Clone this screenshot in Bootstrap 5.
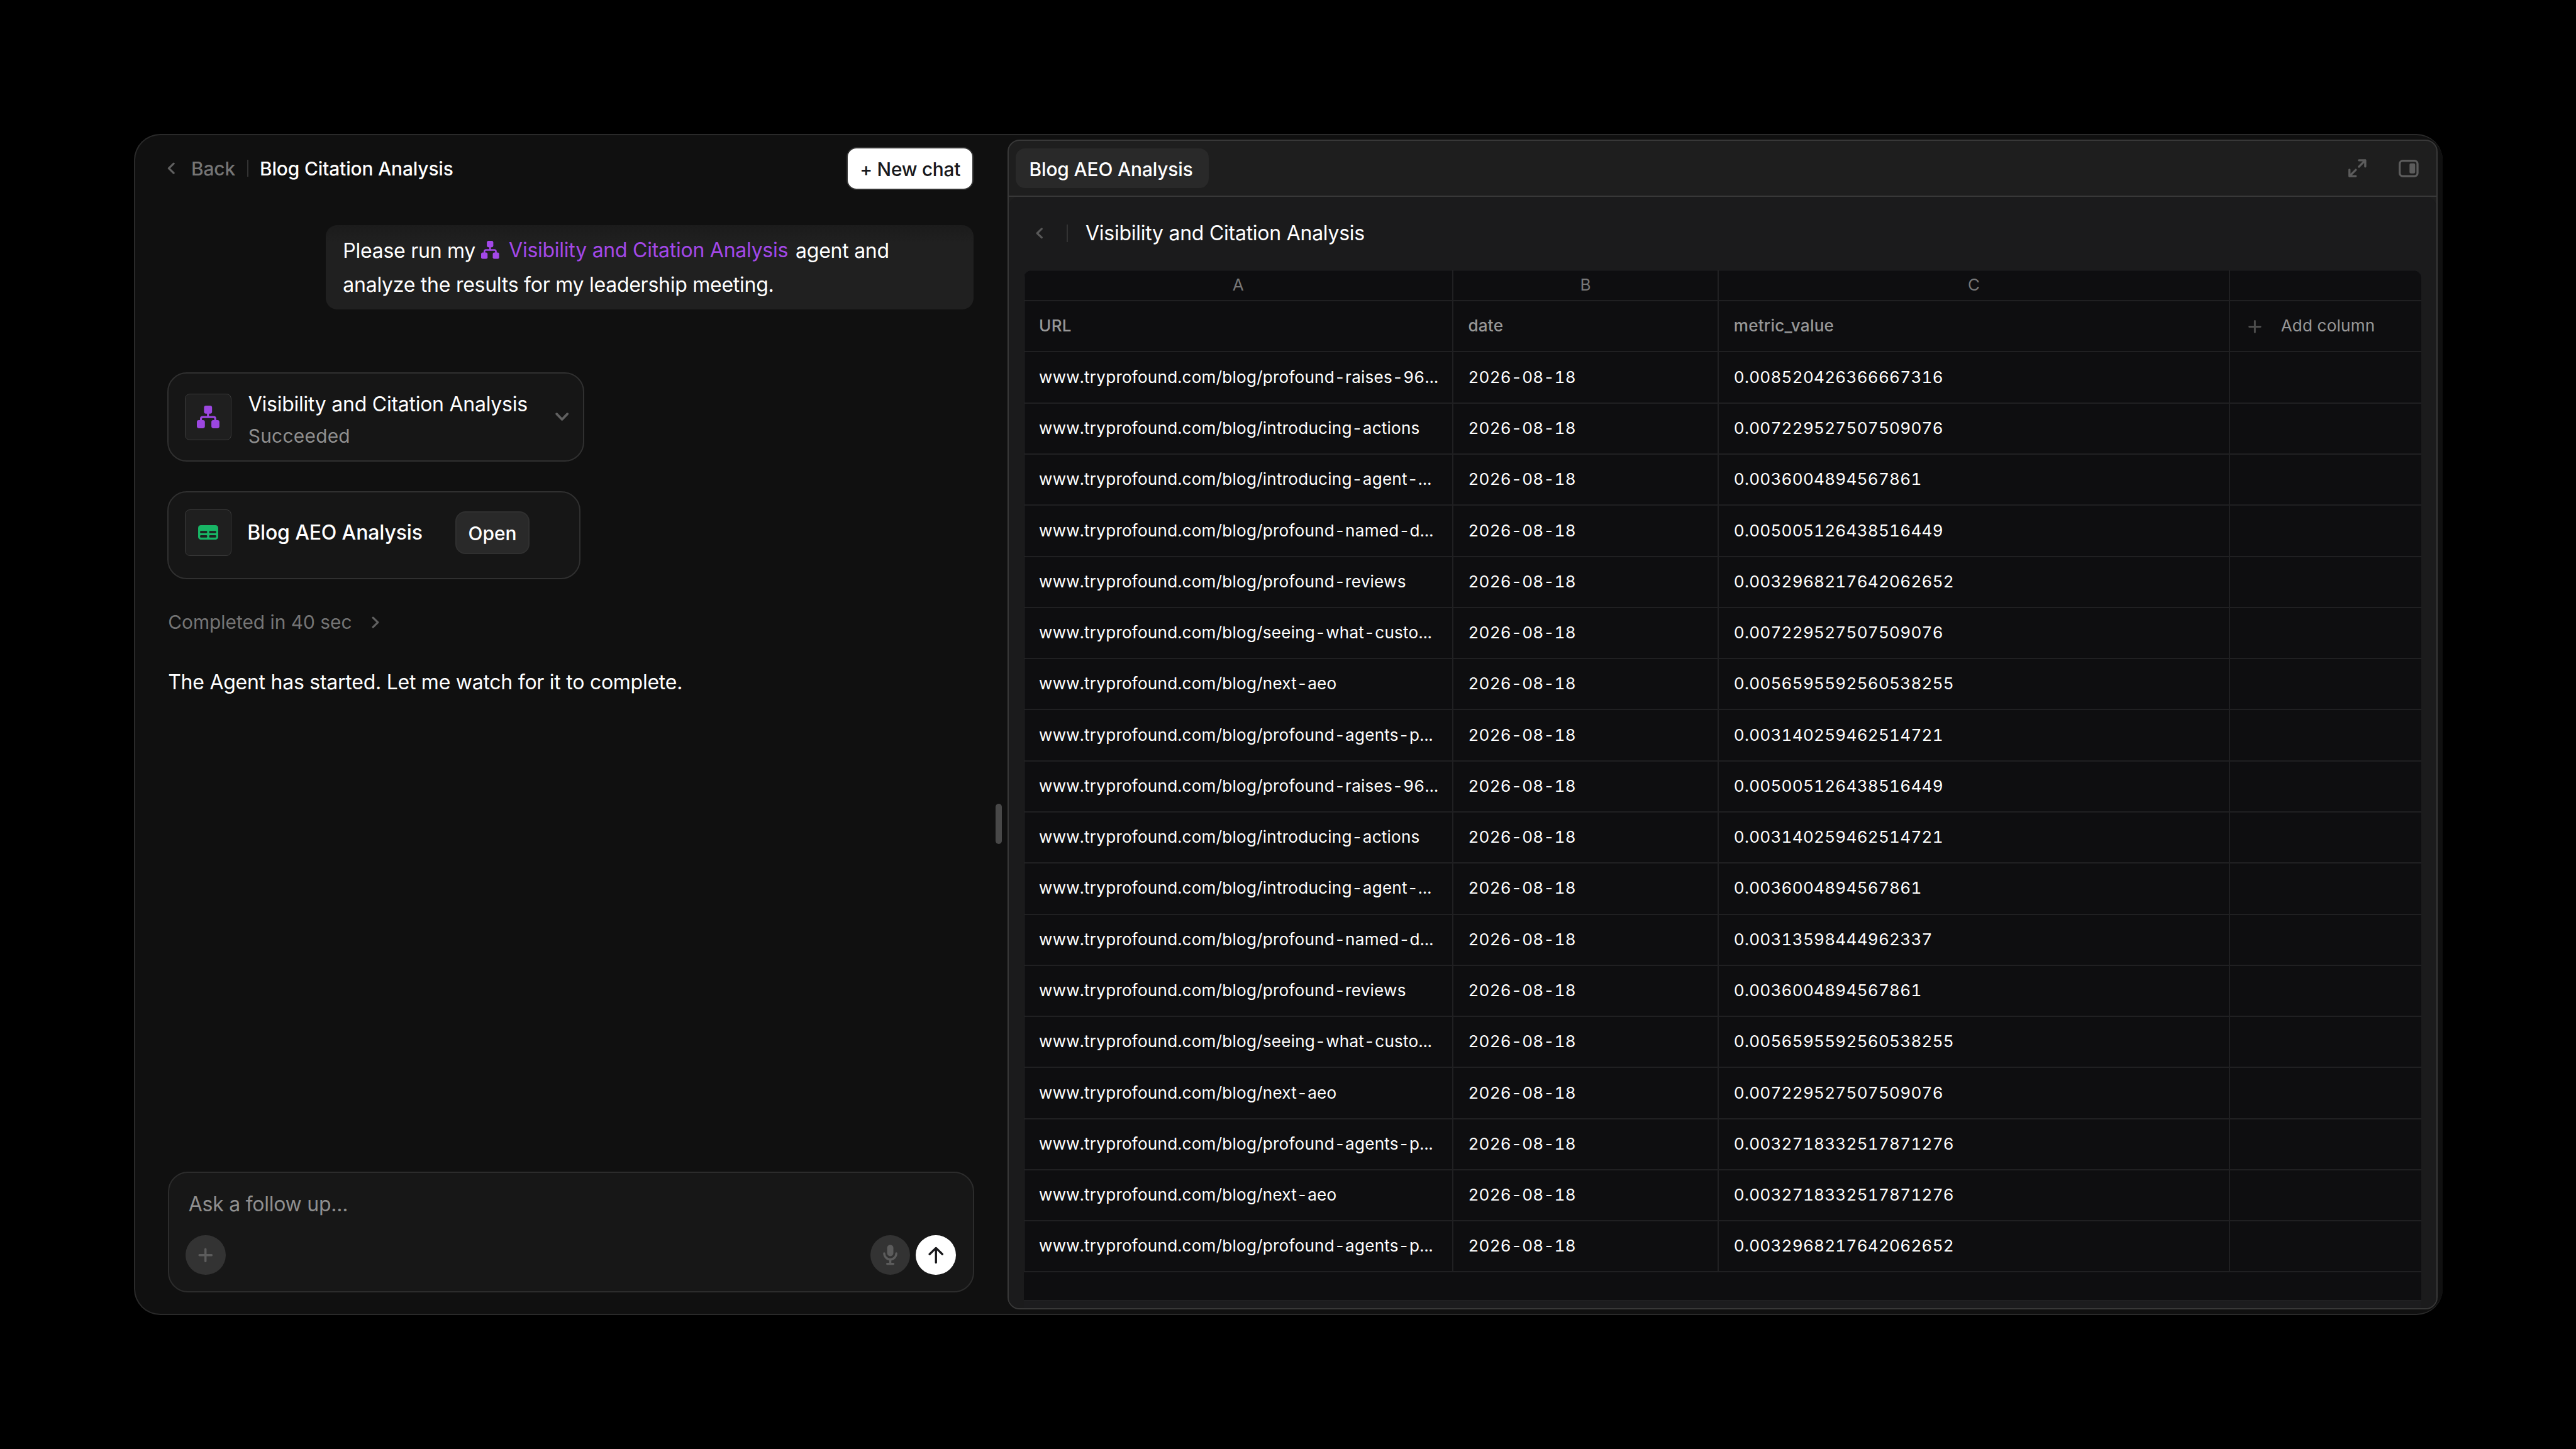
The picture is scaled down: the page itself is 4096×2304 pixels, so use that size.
<!DOCTYPE html>
<html lang="en" data-bs-theme="dark">
<head>
<meta charset="utf-8">
<meta name="viewport" content="width=device-width, initial-scale=1">
<title>Blog Citation Analysis</title>
<link href="https://cdn.jsdelivr.net/npm/bootstrap@5.3.0/dist/css/bootstrap.min.css" rel="stylesheet">
<style>
  html { font-size: 53.3333px; }
  body { margin: 0; padding: 4rem 0 0 4rem; background: #000; color: #fff; font-family: Inter, "Liberation Sans", sans-serif; font-size: .6rem; line-height: 1rem; letter-spacing: -.0078em; width: 4096px; height: 2304px; overflow: hidden; }
  svg { display: block; flex: none; fill: none; stroke-linecap: round; stroke-linejoin: round; }
  .t56 { font-size: .56rem; }
  .mid { font-weight: 500; letter-spacing: -.0045em; }
  .plain { letter-spacing: 0; }
  .dim { color: #757575; }
  .dim-2 { color: #8f8f8f; }
  .bar-v { width: 2px; height: .515rem; background: #333; flex: none; }

  .frame { width: 68.83rem; height: 35.2rem; background: #101010; border: 2px solid #2a2a2a; border-right: 0; border-radius: .78rem; overflow: hidden; }
  .chat { width: 25.9925rem; padding: 0 1rem .6225rem .9425rem; position: relative; flex: none; }
  .chat-top { height: 1.965rem; }
  .chat-top .t56 { padding-top: .05rem; }
  .new-chat { width: 3.79rem; height: 1.276rem; padding: .07rem 0 0; border: 2px solid #333; border-radius: .3rem; background: #fff; color: #18181b; font-size: .56rem; font-weight: 500; line-height: 1; letter-spacing: -.009em; }
  .bubble { width: 19.31rem; height: 2.507rem; margin-top: .7175rem; padding: .26rem 0 0 .505rem; border-radius: .34rem; background: linear-gradient(#1b1b1b, #202020 .55rem); }
  .bubble svg { display: inline-block; width: .54rem; height: .54rem; vertical-align: -.035rem; margin: 0 .29rem 0 0; }
  .agent-name { color: #a348e8; position: relative; top: -.015rem; margin-right: .06rem; }
  .tool { border: 2px solid #303030; border-radius: .58rem; background: #161616; padding-left: .495rem; }
  .tool-run { width: 12.446rem; height: 2.666rem; margin-top: 1.877rem; padding-right: .43rem; }
  .tool-file { width: 12.32rem; height: 2.635rem; margin-top: .87rem; padding-bottom: .156rem; }
  .tool-icon { width: 1.39rem; height: 1.39rem; flex: none; border: 1px solid #3a3a3a; border-radius: .15rem; background: #1f1f1f; }
  .tool-text { margin-left: .5rem; padding-top: .18rem; line-height: .96rem; }
  .tool-text .dim-2 { letter-spacing: .009em; }
  .open-btn { width: 2.213rem; height: 1.28rem; padding: .06rem 0 0; margin-left: .98rem; border: 2px solid #303030; border-radius: .3rem; background: #292929; color: #fff; font-size: .56rem; font-weight: 500; line-height: 1; letter-spacing: 0; }
  .status { margin: .78rem 0 0 .03rem; }
  .reply { margin: .785rem 0 0 .03rem; }
  .composer { width: 24.035rem; height: 3.6rem; margin: auto 0 0 .02rem; padding: .416rem .497rem .49rem .493rem; border: 2px solid #2c2c2c; border-radius: .6rem; background: #171717; }
  .composer .hint { padding-left: .09rem; }
  .round-btn { width: 1.193rem; height: 1.193rem; padding: 0; border: 0; border-radius: 50%; background: #333; }
  .round-btn.send { background: #fff; margin-left: .173rem; }
  .grip { position: absolute; right: .167rem; top: 19.93rem; width: .173rem; height: 1.193rem; border-radius: .1rem; background: #484848; }

  .panel { width: 42.642rem; height: 34.863rem; margin-top: .1295rem; flex: none; border: 2px solid #383838; border-radius: .36rem; background: #1e1e1e; overflow: hidden; }
  .panel-top { height: 1.666rem; padding: 0 .524rem 0 .219rem; border-bottom: 2px solid #383838; flex: none; }
  .tab { height: 1.194rem; width: 5.76rem; padding: .06rem 0 0 .4rem; border-radius: .28rem; background: #292929; font-size: .56rem; }
  .panel-body { border-radius: .3rem .3rem 0 0; background: #1b1b1c; }
  .panel-title { height: 2.178rem; padding-left: .817rem; flex: none; }
  .sheet { width: 41.668rem; height: 30.712rem; margin-left: .451rem; flex: none; background: #0e0e10; border-radius: .22rem .22rem 0 0; box-shadow: inset 0 1px 0 #242426; overflow: hidden; }
  .sheet-foot { width: 41.668rem; margin-left: .451rem; border-top: 2px solid #202022; background: #1c1c1e; }
  .grid-table { width: 41.668rem; margin: 0; table-layout: fixed; border-collapse: separate; border-spacing: 0; font-size: .49rem; line-height: .6rem; letter-spacing: .008em; font-feature-settings: "tnum"; }
  .grid-table th, .grid-table td { height: 1.5243rem; padding: 0 0 .015rem .44rem; vertical-align: middle; border: 0 solid #202022; border-width: 0 2px 2px 0; white-space: nowrap; overflow: hidden; }
  .grid-table td { font-weight: 400; }
  .grid-table th { font-weight: 500; color: #979797; }
  .grid-table th:last-child, .grid-table td:last-child { border-right: 0; }
  .grid-table tr > :first-child { border-left: 1px solid #242426; }
  .grid-table .letters th { height: .936rem; padding: .01rem 0 0; text-align: center; font-weight: 400; color: #777; }
  .add-col { font-weight: 400; }
</style>
</head>
<body>
<svg width="0" height="0" class="position-absolute">
  <symbol id="flow" viewBox="0 0 202 202">
    <g fill="currentColor"><rect x="64" y="0" width="72" height="72" rx="17"/><rect x="0" y="130" width="72" height="72" rx="17"/><rect x="130" y="130" width="72" height="72" rx="17"/></g>
    <path d="M37 135V118Q37 102 53 102H149Q165 102 165 118V135M100 68V102" stroke="currentColor" stroke-width="18" fill="none"/>
  </symbol>
</svg>
<div class="frame d-flex">
  <section class="chat d-flex flex-column">
    <header class="chat-top d-flex align-items-center">
      <svg style="width:.23rem;height:.36rem" viewBox="0 0 23 36" stroke="#606060" stroke-width="6"><path d="M19 4L4.500 18L19 32"/></svg>
      <span class="t56 mid dim" style="margin-left:.49rem">Back</span>
      <span class="bar-v" style="margin-left:.36rem"></span>
      <span class="t56 mid" style="margin-left:.335rem">Blog Citation Analysis</span>
      <button class="btn new-chat ms-auto">+ New chat</button>
    </header>
    <div class="bubble align-self-end">Please run my <svg color="#a348e8"><use href="#flow"/></svg><span class="agent-name">Visibility and Citation Analysis</span> agent and<br>analyze the results for my leadership meeting.</div>
    <div class="tool tool-run d-flex align-items-center">
      <div class="tool-icon d-flex align-items-center justify-content-center"><svg style="width:.673rem;height:.673rem" color="#9c47e0"><use href="#flow"/></svg></div>
      <div class="tool-text"><div>Visibility and Citation Analysis</div><div class="t56 dim-2">Succeeded</div></div>
      <svg class="ms-auto" style="width:.4rem;height:.26rem" viewBox="0 0 40 26" stroke="#606060" stroke-width="7"><path d="M4 4L20 20.500L36 4"/></svg>
    </div>
    <div class="tool tool-file d-flex align-items-center">
      <div class="tool-icon d-flex align-items-center justify-content-center"><svg style="width:.6rem;height:.433rem" viewBox="0 0 180 130"><rect width="180" height="130" rx="25" fill="#18b565"/><g fill="#1f1f1f"><rect x="18" y="52" width="63" height="20" rx="7"/><rect x="99" y="52" width="63" height="20" rx="7"/><rect x="18" y="90" width="63" height="21" rx="7"/><rect x="99" y="90" width="63" height="21" rx="7"/></g></svg></div>
      <span class="mid" style="margin-left:.47rem">Blog AEO Analysis</span>
      <button class="btn open-btn">Open</button>
    </div>
    <div class="status t56 dim plain d-flex align-items-center">Completed in 40 sec
      <svg style="width:.23rem;height:.36rem;margin-left:.59rem" viewBox="0 0 23 36" stroke="#606060" stroke-width="6"><path d="M4 4L18.500 18L4 32"/></svg>
    </div>
    <div class="reply">The Agent has started. Let me watch for it to complete.</div>
    <div class="composer d-flex flex-column justify-content-between">
      <div class="hint dim-2">Ask a follow up...</div>
      <div class="d-flex">
        <button class="btn round-btn d-flex align-items-center justify-content-center"><svg style="width:.44rem;height:.44rem" viewBox="0 0 44 44" stroke="#5c5c5c" stroke-width="6.500"><path d="M22 4V40M4 22H40"/></svg></button>
        <button class="btn round-btn ms-auto d-flex align-items-center justify-content-center"><svg style="width:.434rem;height:.61rem" viewBox="0 0 43.400 61"><rect x="12.400" y=".7" width="18.600" height="34" rx="9.300" fill="#5c5c5c"/><path d="M3.600 26A18.100 18.300 0 0 0 39.800 26M21.700 44V56M12.500 57.300H31" stroke="#5c5c5c" stroke-width="6.300"/></svg></button>
        <button class="btn round-btn send d-flex align-items-center justify-content-center"><svg style="width:.46rem;height:.52rem" viewBox="0 0 46 52" stroke="#18181b" stroke-width="6.300"><path d="M23 48V4.500M4 23L23 4.500L42 23"/></svg></button>
      </div>
    </div>
    <div class="grip"></div>
  </section>
  <section class="panel d-flex flex-column">
    <div class="panel-top d-flex align-items-center">
      <div class="tab mid d-flex align-items-center">Blog AEO Analysis</div>
      <svg class="ms-auto" style="width:.575rem;height:.58rem" viewBox="0 0 57.500 58" stroke="#5c5c5c" stroke-width="6.300"><path d="M33.500 5.300H52.300V24M52.300 5.300L33.500 24.500M5.200 33.500V52.700H24M5.200 52.700L24 34"/></svg>
      <svg style="width:.594rem;height:.52rem;margin-left:.94rem" viewBox="0 0 59.400 52"><rect x="3.100" y="3.100" width="53.200" height="45.800" rx="9" stroke="#5c5c5c" stroke-width="6.200"/><rect x="32.400" y="11" width="16.800" height="30" rx="4" fill="#5c5c5c"/></svg>
    </div>
    <div class="panel-body flex-grow-1 d-flex flex-column">
      <div class="panel-title d-flex align-items-center">
        <svg style="width:.21rem;height:.33rem" viewBox="0 0 21 33" stroke="#585858" stroke-width="6"><path d="M17.500 3.500L4 16.500L17.500 29.500"/></svg>
        <span class="bar-v" style="margin-left:.7rem"></span>
        <span style="margin-left:.53rem">Visibility and Citation Analysis</span>
      </div>
      <div class="sheet">
        <table class="grid-table">
          <colgroup><col style="width:12.812rem"><col style="width:7.92rem"><col style="width:15.24rem"><col></colgroup>
          <thead>
            <tr class="letters"><th>A</th><th>B</th><th>C</th><th></th></tr>
            <tr><th>URL</th><th>date</th><th>metric_value</th><th><div class="add-col d-flex align-items-center"><svg style="width:.39rem;height:.39rem;margin:.03rem .57rem 0 .11rem" viewBox="0 0 39 39" stroke="#4c4c4c" stroke-width="5.600"><path d="M19.500 3V36M3 19.500H36"/></svg>Add column</div></th></tr>
          </thead>
          <tbody id="rows"></tbody>
        </table>
      </div>
      <div class="sheet-foot flex-grow-1"></div>
    </div>
  </section>
</div>
<script src="https://cdn.jsdelivr.net/npm/bootstrap@5.3.0/dist/js/bootstrap.bundle.min.js"></script>
<script>
  const rows = [
    ["profound-raises-96...", "0.008520426366667316"],
    ["introducing-actions", "0.007229527507509076"],
    ["introducing-agent-...", "0.0036004894567861"],
    ["profound-named-d...", "0.005005126438516449"],
    ["profound-reviews", "0.0032968217642062652"],
    ["seeing-what-custo...", "0.007229527507509076"],
    ["next-aeo", "0.0056595592560538255"],
    ["profound-agents-p...", "0.003140259462514721"],
    ["profound-raises-96...", "0.005005126438516449"],
    ["introducing-actions", "0.003140259462514721"],
    ["introducing-agent-...", "0.0036004894567861"],
    ["profound-named-d...", "0.00313598444962337"],
    ["profound-reviews", "0.0036004894567861"],
    ["seeing-what-custo...", "0.0056595592560538255"],
    ["next-aeo", "0.007229527507509076"],
    ["profound-agents-p...", "0.0032718332517871276"],
    ["next-aeo", "0.0032718332517871276"],
    ["profound-agents-p...", "0.0032968217642062652"]
  ];
  document.getElementById("rows").innerHTML = rows.map(([slug, value]) =>
    `<tr><td>www.tryprofound.com/blog/${slug}</td><td>2026-08-18</td><td>${value}</td><td></td></tr>`).join("");
</script>
</body>
</html>
